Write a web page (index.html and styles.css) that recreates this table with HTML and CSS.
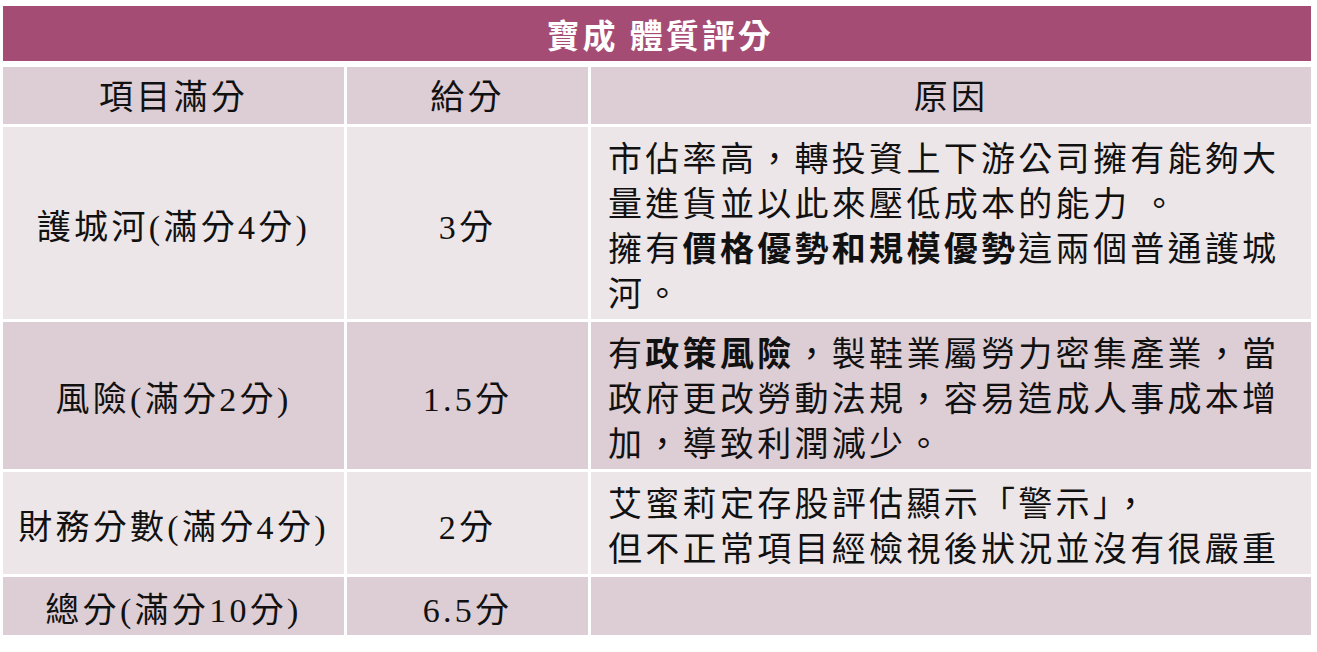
FILE: index.html
```html
<!DOCTYPE html>
<html lang="zh-Hant">
<head>
<meta charset="utf-8">
<title>寶成 體質評分</title>
<link rel="stylesheet" href="styles.css">
</head>
<body>
<div class="sheet">
  <div class="title">寶成 體質評分</div>
  <div class="table">
    <div class="cell head c1"><div class="txt">項目滿分</div></div>
    <div class="cell head c2"><div class="txt">給分</div></div>
    <div class="cell head c3 center"><div class="txt">原因</div></div>

    <div class="cell light c1"><div class="txt">護城河(滿分4分)</div></div>
    <div class="cell light c2"><div class="txt">3分</div></div>
    <div class="cell light c3"><div class="txt">市佔率高，轉投資上下游公司擁有能夠大<br>量進貨並以此來壓低成本的能力 。<br>擁有<b>價格優勢和規模優勢</b>這兩個普通護城<br>河。</div></div>

    <div class="cell dark c1"><div class="txt">風險(滿分2分)</div></div>
    <div class="cell dark c2"><div class="txt">1.5分</div></div>
    <div class="cell dark c3"><div class="txt">有<b>政策風險</b>，製鞋業屬勞力密集產業，當<br>政府更改勞動法規，容易造成人事成本增<br>加，導致利潤減少。</div></div>

    <div class="cell light c1"><div class="txt">財務分數(滿分4分)</div></div>
    <div class="cell light c2"><div class="txt">2分</div></div>
    <div class="cell light c3"><div class="txt">艾蜜莉定存股評估顯示「警示」，<br>但不正常項目經檢視後狀況並沒有很嚴重</div></div>

    <div class="cell dark c1"><div class="txt">總分(滿分10分)</div></div>
    <div class="cell dark c2"><div class="txt">6.5分</div></div>
    <div class="cell dark c3"></div>
  </div>
</div>
</body>
</html>
```
FILE: styles.css
```css
html, body {
  margin: 0;
  padding: 0;
  background: #ffffff;
}

body {
  font-family: "Liberation Serif", "Noto Sans CJK TC", serif;
  color: #111111;
}

.sheet {
  width: 1308px;
  padding: 6px 0 0 3px;
}

.title {
  height: 55px;
  background: #a54c75;
  color: #ffffff;
  font-size: 33px;
  font-weight: 700;
  display: flex;
  align-items: center;
  justify-content: center;
  margin-bottom: 6px;
  letter-spacing: 3px;
  padding-left: 6px;
}

.table {
  display: grid;
  grid-template-columns: 341px 241px 720px;
  grid-template-rows: 57px 192px 147px 102px 58px;
  gap: 3px;
}

.cell {
  display: flex;
  align-items: center;
  font-size: 34px;
  line-height: 45px;
  letter-spacing: 3.3px;
  padding-top: 8px;
}

.head {
  padding-top: 4px;
}

.cell b {
  font-weight: 700;
}

.c1, .c2, .center {
  justify-content: center;
  text-align: center;
}

.c3 {
  padding-left: 17px;
  padding-right: 17px;
  white-space: nowrap;
}

.head {
  background: #ddcdd4;
}

.dark {
  background: #ddcdd4;
}

.light {
  background: #ede6e9;
}
```
